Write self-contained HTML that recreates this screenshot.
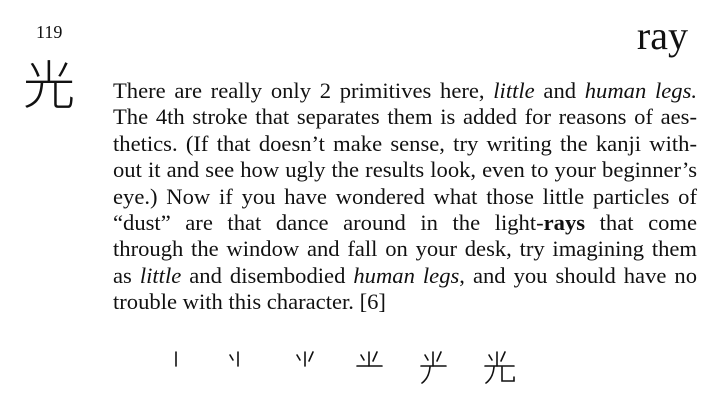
<!DOCTYPE html>
<html><head><meta charset="utf-8"><style>
html,body{margin:0;padding:0;background:#fff;width:728px;height:418px;overflow:hidden;}
body{position:relative;font-family:"Liberation Serif",serif;color:#111;}
.num{position:absolute;left:36px;top:22px;font-size:18px;}
.ray{position:absolute;right:40px;top:12px;font-size:40px;}
.kanji{position:absolute;left:23px;top:56px;font-size:52px;font-family:"Noto Sans CJK JP","Noto Serif CJK SC",sans-serif;font-weight:300;line-height:1;}
.txt{position:absolute;left:113px;top:78px;width:584px;font-size:22.6px;line-height:26.4px;}
.l{display:block;text-align:justify;text-align-last:justify;white-space:nowrap;}
.last{text-align-last:left;}
</style></head><body>
<div class="num">119</div>
<div class="ray">ray</div>
<div class="kanji">光</div>
<div class="txt">
<span class="l">There are really only 2 primitives here, <i>little</i> and <i>human legs.</i></span>
<span class="l">The 4th stroke that separates them is added for reasons of aes-</span>
<span class="l">thetics. (If that doesn’t make sense, try writing the kanji with-</span>
<span class="l">out it and see how ugly the results look, even to your beginner’s</span>
<span class="l">eye.) Now if you have wondered what those little particles of</span>
<span class="l">“dust” are that dance around in the light-<b>rays</b> that come</span>
<span class="l">through the window and fall on your desk, try imagining them</span>
<span class="l">as <i>little</i> and disembodied <i>human legs</i>, and you should have no</span>
<span class="l last">trouble with this character. [6]</span>
</div>
<svg style="position:absolute;left:0;top:0" width="728" height="418" fill="none" stroke="#111" stroke-width="1.6" stroke-linecap="round">
<g transform="translate(176,0)"><path d="M0 352 L0 366"/></g>
<g transform="translate(230,0)"><path d="M0 355 L3 360"/><path d="M8 352 L8 366"/></g>
<g transform="translate(297,0)"><path d="M0 355 L3 360"/><path d="M8 352 L8 366"/><path d="M16 352 L12 361"/></g>
<g transform="translate(356,0)"><path d="M5 355 L8 360"/><path d="M13 352 L13 366"/><path d="M21 352 L17 361"/><path d="M1 366 L26 366"/></g>
<g transform="translate(420,0)"><path d="M5 355 L8 360"/><path d="M13 352 L13 366"/><path d="M21 352 L17 361"/><path d="M1 366 L26 366"/><path d="M10 367 Q9 378 2 383"/></g>
<g transform="translate(484,0)"><path d="M5 355 L8 360"/><path d="M13 352 L13 366"/><path d="M21 352 L17 361"/><path d="M1 366 L30 366"/><path d="M10 367 Q9 378 2 383"/><path d="M18 367 L18 381 L30 381 L30 377"/></g>
</svg>
</body></html>
